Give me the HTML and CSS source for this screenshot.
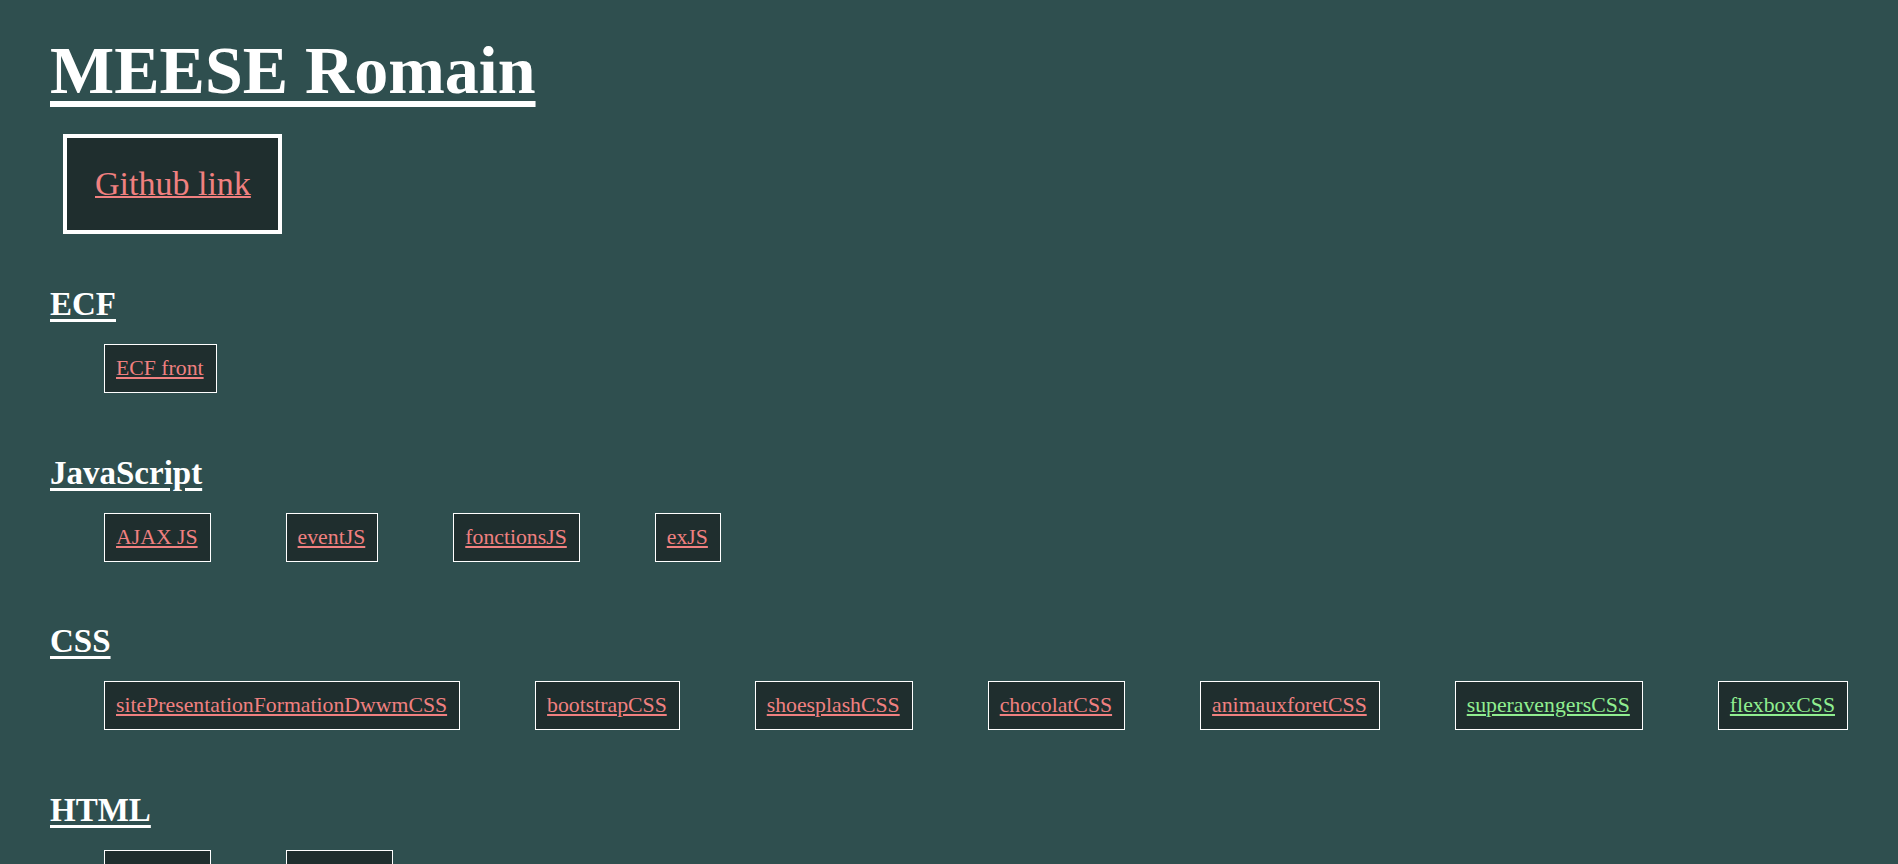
FILE: index.html
```html
<!DOCTYPE html>
<html lang="fr">
<head>
<meta charset="utf-8">
<title>MEESE Romain</title>
<link rel="stylesheet" href="styles.css">
</head>
<body>
<header class="top">
  <h1 class="title">MEESE Romain</h1>
  <a class="github" href="#">Github link</a>
</header>
<main class="sections">
  <section class="section">
    <h2 class="section-title">ECF</h2>
    <ul class="items">
      <li class="item"><a href="#">ECF front</a></li>
    </ul>
  </section>
  <section class="section">
    <h2 class="section-title">JavaScript</h2>
    <ul class="items">
      <li class="item"><a href="#">AJAX JS</a></li>
      <li class="item"><a href="#">eventJS</a></li>
      <li class="item"><a href="#">fonctionsJS</a></li>
      <li class="item"><a href="#">exJS</a></li>
    </ul>
  </section>
  <section class="section">
    <h2 class="section-title">CSS</h2>
    <ul class="items">
      <li class="item"><a href="#">sitePresentationFormationDwwmCSS</a></li>
      <li class="item"><a href="#">bootstrapCSS</a></li>
      <li class="item"><a href="#">shoesplashCSS</a></li>
      <li class="item"><a href="#">chocolatCSS</a></li>
      <li class="item"><a href="#">animauxforetCSS</a></li>
      <li class="item"><a class="visited" href="#">superavengersCSS</a></li>
      <li class="item"><a class="visited" href="#">flexboxCSS</a></li>
    </ul>
  </section>
  <section class="section">
    <h2 class="section-title">HTML</h2>
    <ul class="items">
      <li class="item"><a href="#">cvHTML</a></li>
      <li class="item"><a href="#">exHTML</a></li>
    </ul>
  </section>
</main>
</body>
</html>
```

FILE: styles.css
```css
html, body {
  margin: 0;
  padding: 0;
}

body {
  background: #2f4f4f;
  color: #ffffff;
  font-family: "Liberation Serif", "Times New Roman", serif;
  padding: 33px 0 0 50px;
  overflow: hidden;
  height: 864px;
  box-sizing: border-box;
}

.top {
  display: flex;
  flex-direction: column;
  align-items: flex-start;
}

.title {
  margin: 0;
  font-size: 68px;
  font-weight: bold;
  line-height: 75px;
  text-decoration: underline;
  text-decoration-thickness: 6px;
  text-underline-offset: 8px;
}

.github {
  margin: 26px 0 0 13px;
  display: inline-block;
  border: 4px solid #ffffff;
  background: #1f2e2e;
  padding: 27px 27px 27px 28px;
  font-size: 34px;
  line-height: 38px;
  color: #f08080;
  text-decoration: underline;
  text-decoration-thickness: 2px;
}

.sections {
  display: flex;
  flex-direction: column;
  margin-top: 52px;
}

.section {
  display: flex;
  flex-direction: column;
  align-items: flex-start;
  flex: 0 0 168.5px;
}

.section-title {
  margin: 0;
  font-size: 33px;
  font-weight: bold;
  line-height: 37px;
  text-decoration: underline;
  text-decoration-thickness: 3px;
  text-underline-offset: 4px;
}

.items {
  list-style: none;
  margin: 21px 0 0 54px;
  padding: 0;
  display: flex;
  gap: 75px;
}

.item {
  border: 1px solid #ffffff;
  background: #1f2e2e;
  padding: 11px 12px 11px 11px;
  font-size: 21.75px;
  line-height: 25px;
}

.item a {
  color: #f08080;
}

.item a.visited {
  color: #90ee90;
}
```
